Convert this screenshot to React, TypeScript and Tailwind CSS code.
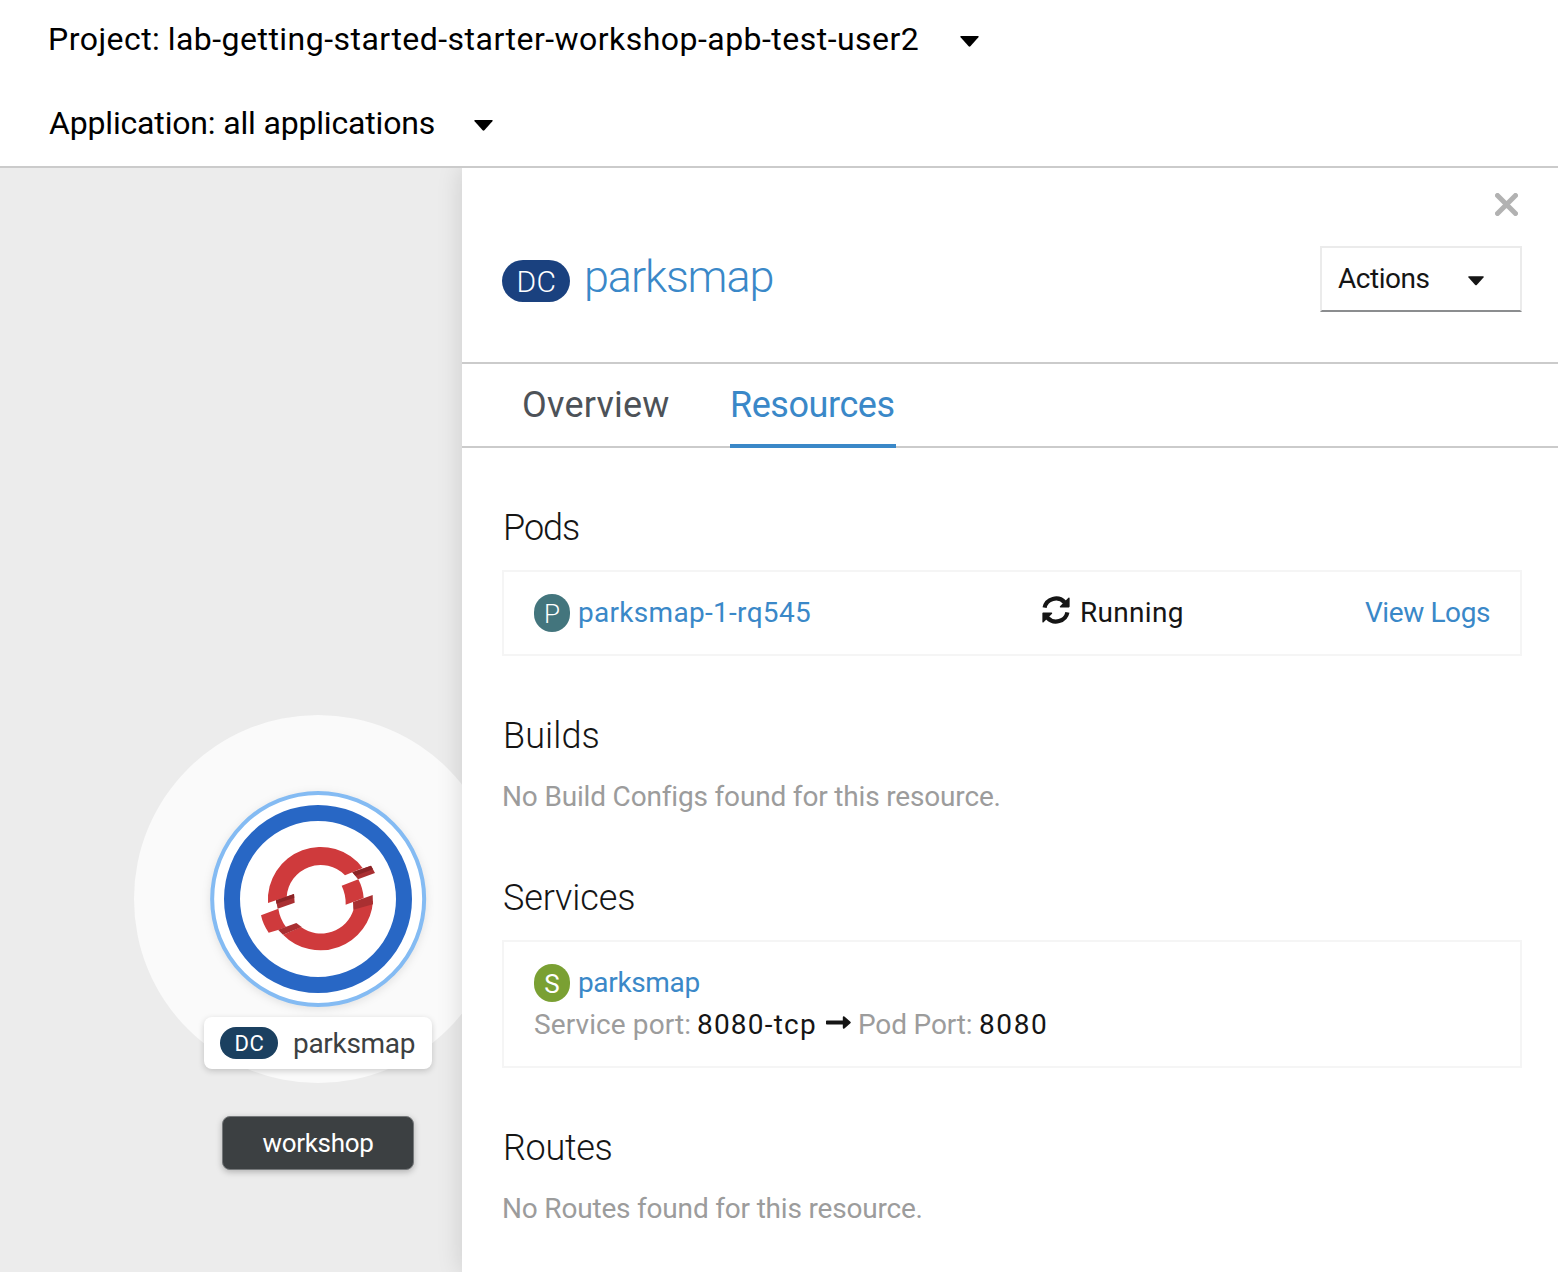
import type { ReactNode } from "react";

function Caret({ className }: { className: string }) {
  return (
    <svg viewBox="0 0 19 11" className={className} fill="currentColor">
      <path d="M1 0H18Q19.2.2 18.4 1.3L10.4 10.2Q9.5 11.1 8.6 10.2L.6 1.3Q-.2.2 1 0Z" />
    </svg>
  );
}

function SyncIcon() {
  return (
    <svg viewBox="0 0 28 28" className="mt-[5px] h-7 w-7 shrink-0" fill="none">
      <path d="M2.6 11.6A11.6 11.2 0 0 1 22.6 6.2" stroke="#151515" strokeWidth="4.2" />
      <path d="M25.4 16.4A11.6 11.2 0 0 1 5.4 21.8" stroke="#151515" strokeWidth="4.2" />
      <path d="M27.6 2V10.6Q27.6 11.4 26.8 11.4H18.4Q17.3 11.2 18 10.2L26.4 1.7Q27.4 1 27.6 2Z" fill="#151515" />
      <path d="M.4 26V17.4Q.4 16.6 1.2 16.6H9.6Q10.7 16.8 10 17.8L1.6 26.3Q.6 27 .4 26Z" fill="#151515" />
    </svg>
  );
}

function OpenShiftNode() {
  return (
    <svg viewBox="0 0 720 720" className="h-60 w-60 drop-shadow-[0_2px_4px_rgba(0,0,0,0.1)]">
      <circle cx="354.5" cy="357" r="318" fill="#fff" stroke="#84bbf3" strokeWidth="12" />
      <circle cx="354" cy="357" r="258" fill="none" stroke="#2867c5" strokeWidth="48" />
      <g fill="#cf3a3c">
        <path d="M204 369A158 158 0 0 1 488 264L457 277L435 286A102 102 0 0 0 260 351L228 361Z" />
        <path d="M183 406L235 386A125 125 0 0 0 258 441L234 450L206 458Q189 434 183 406Z" />
        <path d="M425 317L475 298Q489 325 491 354L437 374Q438 344 425 317Z" />
        <path d="M249 464L303 441A102 102 0 0 0 461 388L519 363A158 158 0 0 1 249 464Z" />
      </g>
      <g fill="#a92f31">
        <path d="M234 449L289 429L305 441L249 464Z" />
        <path d="M459 366L518 345L519 373L460 389Z" />
        <path d="M457 277L513 257L525 279L474 298Z" />
        <path d="M228 361L282 342L284 368L233 386Z" />
      </g>
      <g fill="#8b2426">
        <path d="M457 277L513 257L519 268L466 287Z" />
        <path d="M228 361L282 342L283 353Q255 362 229 371Z" />
      </g>
    </svg>
  );
}

function Heading({ children, className }: { children: ReactNode; className: string }) {
  return <h2 className={`pl-px text-[36px] leading-10 font-light text-[#151515] ${className}`}>{children}</h2>;
}

function ResourceBadge({ letter, className }: { letter: string; className: string }) {
  return (
    <span
      className={`mt-[3px] flex h-[38px] w-9 shrink-0 items-center justify-center rounded-full pt-px text-[26px] leading-none text-white ${className}`}
    >
      {letter}
    </span>
  );
}

export default function App() {
  return (
    <div className="flex h-[1272px] w-[1558px] flex-col overflow-hidden bg-white font-[Roboto,sans-serif] whitespace-nowrap">
      <header className="flex h-[168px] shrink-0 flex-col border-b-2 border-[#cbcbcb] pl-[48px] text-[32px] leading-10 text-black">
        <button className="mt-[19px] flex items-center self-start">
          <span className="w-[912px] text-left tracking-[0.47px] [word-spacing:-1px]">
            Project: lab-getting-started-starter-workshop-apb-test-user2
          </span>
          <Caret className="mt-1 h-[11px] w-[19px]" />
        </button>
        <button className="mt-11 flex items-center self-start pl-px">
          <span className="w-[425px] text-left tracking-[-0.17px]">Application: all applications</span>
          <Caret className="mt-1 h-[11px] w-[19px]" />
        </button>
      </header>

      <div className="flex min-h-0 flex-1 overflow-hidden">
        <main className="relative w-[462px] shrink-0 overflow-hidden bg-[#ececec]">
          <div className="absolute top-[547px] left-[134px] h-[368px] w-[368px] rounded-full bg-[#fafafa]" />
          <div className="absolute top-[612px] left-[200px]">
            <OpenShiftNode />
          </div>
          <div className="absolute top-[849px] left-[204px] flex h-[52px] w-[228px] items-center rounded-lg bg-white pl-4 shadow-[0_2px_6px_rgba(0,0,0,0.18)]">
            <span className="flex h-8 w-[58px] items-center justify-center rounded-full bg-[#1b4060] pt-px pl-px text-[22px] leading-none tracking-[0.5px] text-white">
              DC
            </span>
            <span className="ml-[15px] pt-[2px] text-[28px] leading-[52px] tracking-[-0.3px] text-[#3c4042]">parksmap</span>
          </div>
          <div className="absolute top-[948px] left-[222px] flex h-[54px] w-48 items-center justify-center rounded-lg border border-[#75787a] bg-[#3c4042] text-[26px] leading-none tracking-[-0.3px] text-white shadow-[0_2px_6px_rgba(0,0,0,0.25)]">
            workshop
          </div>
        </main>

        <aside className="z-10 flex min-w-0 flex-1 flex-col bg-white shadow-[0_0_24px_rgba(0,0,0,0.14)]">
          <div className="flex h-[196px] shrink-0 flex-col border-b-2 border-[#cbcbcb] pr-9 pl-10">
            <button className="mt-[25px] mr-[4.5px] self-end" aria-label="Close">
              <svg viewBox="0 0 23 23" className="block h-[23px] w-[23px]">
                <path d="M2.5 2.5L20.5 20.5M20.5 2.5L2.5 20.5" stroke="#b2b2b2" strokeWidth="5" strokeLinecap="round" />
              </svg>
            </button>
            <div className="mt-[30px] flex h-[66px] items-start justify-between">
              <div className="flex">
                <span className="mt-[14px] flex h-[42px] w-[68px] items-center justify-center rounded-[21px] bg-[#1a417f] pt-px pl-px text-[30px] leading-none font-light tracking-[0.5px] text-white">
                  DC
                </span>
                <h1 className="ml-[14px] text-[45px] leading-[62px] font-light tracking-[-1.1px] text-[#3a88c8]">parksmap</h1>
              </div>
              <button className="flex h-[66px] w-[202px] items-center border-2 border-[#ebebeb] border-b-[#8b8d8f] pl-4 text-[28px] leading-none text-[#151515]">
                <span className="w-[130px] text-left tracking-[-0.45px]">Actions</span>
                <Caret className="mt-1 h-[10px] w-4" />
              </button>
            </div>
          </div>

          <nav className="flex h-[84px] shrink-0 border-b-2 border-[#cbcbcb] pl-[60px] text-[36px] leading-[79px]">
            <button className="w-[208px] text-left tracking-[0.2px] text-[#4d5258]">Overview</button>
            <button className="h-[84px] w-[166px] border-b-4 border-[#3a88c8] pt-[2px] text-left tracking-[-0.45px] text-[#3a88c8]">
              Resources
            </button>
          </nav>

          <div className="flex flex-col pr-9 pl-10 text-[28px]">
            <Heading className="mt-[60px] tracking-[-1px]">Pods</Heading>
            <div className="mt-[22px] flex h-[86px] border-2 border-[#f5f5f5] pt-[19px] pr-[30px] pl-[30px] leading-[44px]">
              <div className="flex w-[508px]">
                <ResourceBadge letter="P" className="bg-[#43757d] font-light" />
                <a className="ml-2 tracking-[0.3px] text-[#3a88c8]">parksmap-1-rq545</a>
              </div>
              <div className="flex flex-1 text-[#151515]">
                <SyncIcon />
                <span className="ml-[10px] tracking-[0.3px]">Running</span>
              </div>
              <a className="tracking-[-0.4px] text-[#3a88c8]">View Logs</a>
            </div>

            <Heading className="mt-[60px] tracking-[0.1px]">Builds</Heading>
            <p className="mt-5 leading-[42px] tracking-[-0.17px] text-[#9c9c9c]">
              No Build Configs found for this resource.
            </p>

            <Heading className="mt-[60px] tracking-[-0.1px]">Services</Heading>
            <div className="mt-[22px] h-32 border-2 border-[#f5f5f5] pt-[19px] pl-[30px] leading-[44px]">
              <div className="flex h-[42px]">
                <ResourceBadge letter="S" className="bg-[#7aa033]" />
                <a className="ml-2 tracking-[-0.35px] text-[#3a88c8]">parksmap</a>
              </div>
              <div className="flex h-[42px] text-[#151515]">
                <span className="w-[163px] tracking-[0.1px] text-[#9c9c9c]">Service port:</span>
                <span className="w-[129px] tracking-[1.2px]">8080-tcp</span>
                <svg viewBox="0 0 25 13" className="mt-[13px] h-[13px] w-[25px]">
                  <path d="M.8 4.4H16.8V1.2Q17-.2 18.4.6L24.4 5.7Q25.2 6.5 24.4 7.3L18.4 12.4Q17 13.2 16.8 11.8V8.6H.8Q0 8.6 0 7.8V5.2Q0 4.4.8 4.4Z" fill="#151515" />
                </svg>
                <span className="ml-[7px] w-[121px] tracking-[-0.15px] text-[#9c9c9c]">Pod Port:</span>
                <span className="tracking-[1.6px]">8080</span>
              </div>
            </div>

            <Heading className="mt-[60px] tracking-[-0.3px]">Routes</Heading>
            <p className="mt-5 leading-[42px] tracking-[-0.19px] text-[#9c9c9c]">No Routes found for this resource.</p>
          </div>
        </aside>
      </div>
    </div>
  );
}
